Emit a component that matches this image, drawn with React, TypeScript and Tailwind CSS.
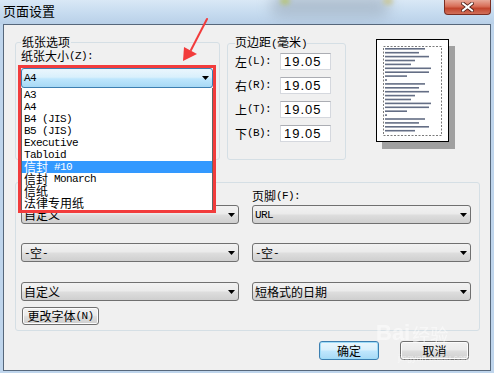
import React from "react";

const CJK = /[\u3000-\u9fff\uff00-\uffef]/;

// SimSun-like mix: CJK at 12px, half-width Latin at 6px per char
function Txt({ s }: { s: string }) {
    const parts = s.split(/([\u3000-\u9fff\uff00-\uffef]+)/).filter(Boolean);
    return (
        <>
            {parts.map((p, i) =>
                CJK.test(p) ? (
                    <span key={i} className="font-['Noto_Sans_CJK_SC',sans-serif] text-[12px]">{p}</span>
                ) : (
                    <span key={i} className="whitespace-pre font-['Liberation_Mono',monospace] text-[11px] tracking-[-0.6px]">{p}</span>
                )
            )}
        </>
    );
}

function DropArrow() {
    return (
        <svg width="7" height="4" viewBox="0 0 7 4" className="shrink-0">
            <polygon points="0,0 7,0 3.5,4" fill="#000" />
        </svg>
    );
}

function Combo({ label, focus, className }: { label: string; focus?: boolean; className: string }) {
    const skin = focus
        ? "border-[#3c7fb1] bg-[linear-gradient(180deg,#eaf6fd_0%,#d9f0fc_45%,#bee6fd_55%,#a7d9f5_100%)]"
        : "border-[#707070] bg-[linear-gradient(180deg,#f2f2f2_0%,#ebebeb_45%,#dddddd_55%,#cfcfcf_100%)]";
    return (
        <div className={`flex items-center justify-between rounded-[3px] border pl-[2px] pr-[3px] leading-[12px] ${skin} ${className}`}>
            <span className="flex h-[12px] items-center">
                <Txt s={label} />
            </span>
            <DropArrow />
        </div>
    );
}

function Button({ label, focus, className }: { label: string; focus?: boolean; className: string }) {
    const skin = focus
        ? "border-[#3c7fb1] bg-[linear-gradient(180deg,#eaf6fd_0%,#d9f0fc_45%,#bee6fd_55%,#a7d9f5_100%)] shadow-[inset_0_0_0_1px_#9fdcf8]"
        : "border-[#707070] bg-[linear-gradient(180deg,#f2f2f2_0%,#ebebeb_45%,#dddddd_55%,#cfcfcf_100%)] shadow-[inset_0_0_0_1px_#fcfcfc]";
    return (
        <div className={`flex items-center justify-center rounded-[3px] border leading-[12px] ${skin} ${className}`}>
            <Txt s={label} />
        </div>
    );
}

const paperSizes = ["A3", "A4", "B4 (JIS)", "B5 (JIS)", "Executive", "Tabloid", "信封 #10", "信封 Monarch", "信纸", "法律专用纸"];
const margins = ["左(L):", "右(R):", "上(T):", "下(B):"];
const lineWidths = [40, 34, 44, 30, 26, 46, 44, 22, 2, 40, 34, 44, 30, 26, 46, 44, 22, 2, 40, 34, 44, 30];

function PagePreview() {
    return (
        <svg width="80" height="111" viewBox="0 0 80 111">
            <rect x="6" y="7" width="73" height="103" fill="#a0a0a0" />
            <rect x="0.5" y="0.5" width="72" height="102" fill="#fff" stroke="#000" />
            <rect x="7.5" y="7.5" width="58" height="89" fill="none" stroke="#7a7a7a" strokeDasharray="2 1.5" />
            {lineWidths.map((w, i) => (
                <rect key={i} x="9" y={9 + i * 3.9} width={w} height="1.6" fill="#3d4a66" opacity="0.8" />
            ))}
        </svg>
    );
}

export default function App() {
    return (
        <div className="relative h-[373px] w-[494px] overflow-hidden bg-[#bfd5ec] font-['Noto_Sans_CJK_SC',sans-serif] text-[12px] text-black">
            {/* title bar */}
            <div className="relative h-[24px] overflow-hidden bg-[linear-gradient(180deg,#d9e8f6_0%,#c6dbef_55%,#b9d0e8_100%)]">
                <div className="absolute left-[270px] top-[-6px] h-[24px] w-[120px] rounded-full bg-[#9aaabb] opacity-60 blur-[7px]" />
                <div className="absolute left-[280px] top-[-3px] h-[8px] w-[10px] rounded-full bg-[#b7c46a] opacity-70 blur-[2px]" />
                <div className="absolute left-[383px] top-[-3px] h-[8px] w-[10px] rounded-full bg-[#c9c48a] opacity-70 blur-[2px]" />
                <div className="relative pl-[3px] pt-[4px] text-[13px] leading-[14px]">页面设置</div>
                <div className="absolute right-[3px] top-0 flex h-[15px] w-[47px] items-center justify-center rounded-b-[4px] border border-t-0 border-[#7b2e22] bg-[linear-gradient(180deg,#e8a898_0%,#d86f59_45%,#c2452d_60%,#d0705a_100%)]">
                    <svg width="13" height="10" viewBox="0 0 13 10">
                        <path d="M2 1.5 L11 8.5 M11 1.5 L2 8.5" stroke="#4a1d16" strokeWidth="3.6" strokeLinecap="square" />
                        <path d="M2 1.5 L11 8.5 M11 1.5 L2 8.5" stroke="#fff" strokeWidth="2" strokeLinecap="square" />
                    </svg>
                </div>
            </div>

            {/* client area */}
            <div className="mx-[3px] h-[347px] border border-[#56677b] bg-[#f0f0f0] pl-[11px] pt-[11px]">
                <div className="flex items-start">
                    <fieldset className="h-[124px] w-[205px] rounded-[3px] border border-[#d5dfe5] pl-[5px]">
                        <legend className="px-[1px] leading-[12px]">
                            <Txt s="纸张选项" />
                        </legend>
                        <div className="mt-[2px] flex h-[12px] items-center">
                            <Txt s="纸张大小(Z):" />
                        </div>
                        <Combo focus label="A4" className="mt-[6px] h-[20px] w-[192px]" />
                    </fieldset>

                    <fieldset className="ml-[7px] h-[124px] w-[119px] rounded-[3px] border border-[#d5dfe5] pl-[7px]">
                        <legend className="leading-[12px]">
                            <Txt s="页边距(毫米)" />
                        </legend>
                        <div className="mt-[3px] flex flex-col gap-[7px]">
                            {margins.map(m => (
                                <div key={m} className="flex h-[17px] items-center">
                                    <div className="flex h-[12px] w-[45px] items-center">
                                        <Txt s={m} />
                                    </div>
                                    <div className="h-[17px] w-[51px] border border-[#d5d8de] border-t-[#abadb3] bg-white pl-[3px] font-['Liberation_Sans',sans-serif] text-[13px] leading-[15px] tracking-[1px]">
                                        19.05
                                    </div>
                                </div>
                            ))}
                        </div>
                    </fieldset>

                    <div className="ml-[30px] mt-[3px]">
                        <PagePreview />
                    </div>
                </div>

                <fieldset className="mt-[16px] h-[155px] w-[465px] rounded-[3px] border border-[#d5dfe5] pl-[5px]">
                    {/* legend and header label sit under the open list */}
                    <legend className="invisible px-[1px] leading-[12px]">
                        <Txt s="页眉和页脚" />
                    </legend>
                    <div className="flex gap-[13px]">
                        <div className="w-[218px]">
                            <div className="invisible mt-[2px] flex h-[12px] items-center">
                                <Txt s="页眉(H):" />
                            </div>
                            <Combo label="自定义" className="mt-[3px] h-[19px]" />
                            <Combo label="-空-" className="mt-[19px] h-[19px]" />
                            <Combo label="自定义" className="mt-[20px] h-[19px]" />
                            <Button label="更改字体(N)" className="ml-[1px] mt-[6px] h-[18px] w-[77px]" />
                        </div>
                        <div className="w-[219px]">
                            <div className="mt-[2px] flex h-[12px] items-center">
                                <Txt s="页脚(F):" />
                            </div>
                            <Combo label="URL" className="mt-[3px] h-[19px]" />
                            <Combo label="-空-" className="mt-[19px] h-[19px]" />
                            <Combo label="短格式的日期" className="mt-[20px] h-[19px]" />
                        </div>
                    </div>
                </fieldset>

                <div className="mt-[10px] flex justify-end gap-[21px] pr-[21px]">
                    <Button focus label="确定" className="h-[19px] w-[60px]" />
                    <Button label="取消" className="h-[19px] w-[69px]" />
                </div>
            </div>

            {/* open dropdown list */}
            <div className="absolute left-[21px] top-[88px] h-[122px] w-[192px] overflow-hidden border-x border-[#646464] bg-white pt-[1px]">
                {paperSizes.map((p, i) => (
                    <div
                        key={p}
                        className={`flex h-[12px] items-center pl-[2px] leading-[12px] ${i === 6 ? "bg-[#3399ff] text-white" : ""}`}
                    >
                        <Txt s={p} />
                    </div>
                ))}
            </div>

            {/* annotation */}
            <div className="absolute left-[18px] top-[65px] h-[148px] w-[198px] border-[3px] border-[#f23c3c]" />
            <svg className="absolute left-[178px] top-[16px]" width="36" height="50" viewBox="0 0 36 50">
                <path d="M29 3 L13 34" stroke="#f23c3c" strokeWidth="2" strokeLinecap="round" />
                <polygon points="5,45 6,31 19,38" fill="#f23c3c" />
            </svg>

            {/* watermark */}
            <div className="absolute left-[376px] top-[322px] flex items-end gap-[2px] text-white opacity-50">
                <span className="font-['Liberation_Sans',sans-serif] text-[22px] font-bold leading-[22px]">Bai</span>
                <span className="text-[18px] leading-[20px]">经验</span>
            </div>
            <div className="absolute left-[398px] top-[352px] font-['Liberation_Sans',sans-serif] text-[9px] text-white opacity-50">
                jingyan.baidu.com
            </div>
        </div>
    );
}
